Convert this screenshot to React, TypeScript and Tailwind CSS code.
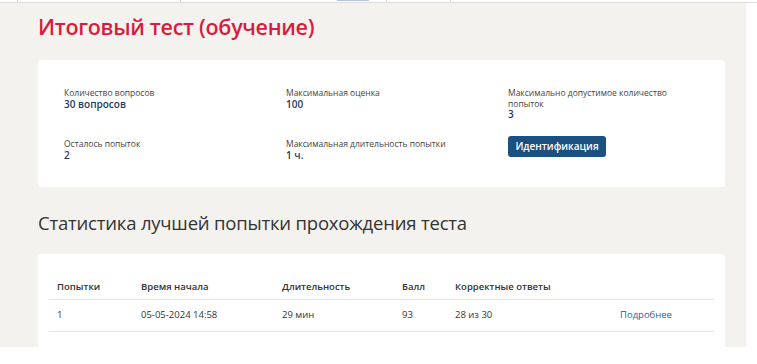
import React from 'react';

const info = [
  { label: 'Количество вопросов', value: '30 вопросов' },
  { label: 'Максимальная оценка', value: '100' },
  { label: 'Максимально допустимое количество попыток', value: '3' },
  { label: 'Осталось попыток', value: '2' },
  { label: 'Максимальная длительность попытки', value: '1 ч.' },
];

const attempts = [
  { n: '1', start: '05-05-2024 14:58', dur: '29 мин', score: '93', correct: '28 из 30' },
];

function InfoItem({ label, value }: { label: string; value: string }) {
  return (
    <div className="flex flex-col">
      <span className="text-[8.5px] leading-[10.5px] text-[#444]">{label}</span>
      <span className="text-[10px] leading-[11px] font-semibold text-[#1d3a63]">{value}</span>
    </div>
  );
}

export default function App() {
  return (
    <div className="w-[757px] h-[364px] bg-white overflow-hidden font-['Open_Sans',sans-serif]">
      {/* Cut-off tab strip */}
      <div className="h-[3px] flex items-end border-b border-[#dcdcdc]">
        <div className="ml-[17px] w-[164px] h-full border-x border-[#d6d6d6]" />
        <div className="ml-[156px] w-[32px] h-[1px] self-start bg-[#b4c2d6]" />
        <div className="ml-[17px] w-[65px] h-full border-x border-[#d6d6d6]" />
      </div>

      {/* Main panel */}
      <div className="w-[746px] h-[344px] bg-[#f3f2ee] overflow-hidden px-[38px] pr-[21px]">
        <h1 className="pt-[8px] text-[21.5px] leading-[32px] font-semibold text-[#d81c3d] tracking-[-0.3px]">
          Итоговый тест (обучение)
        </h1>

        {/* Test info card */}
        <div className="mt-[17px] h-[127px] bg-white rounded-[3px] pl-[26px] pt-[28px]">
          <div className="grid grid-cols-[222px_222px_165px] gap-y-[19px]">
            <InfoItem {...info[0]} />
            <InfoItem {...info[1]} />
            <InfoItem {...info[2]} />
            <InfoItem {...info[3]} />
            <InfoItem {...info[4]} />
            <div className="-mt-[7px]">
              <button className="w-[98px] h-[21px] rounded-[3px] bg-[#1b5082] text-white text-[10px] font-semibold">
                Идентификация
              </button>
            </div>
          </div>
        </div>

        {/* Best attempt statistics */}
        <h2 className="mt-[22px] text-[18.5px] leading-[28px] text-[#333] tracking-[-0.2px]">
          Статистика лучшей попытки прохождения теста
        </h2>

        <div className="mt-[17px] bg-white rounded-[3px] px-[11px] pt-[26px] pb-[20px]">
          <table className="w-full text-left text-[9.5px] text-[#333]">
            <thead>
              <tr className="border-b border-[#e4e4e4]">
                <th className="w-[92px] pl-[8px] h-[19px] font-semibold align-top">Попытки</th>
                <th className="w-[141px] font-semibold align-top">Время начала</th>
                <th className="w-[120px] font-semibold align-top">Длительность</th>
                <th className="w-[53px] font-semibold align-top">Балл</th>
                <th className="w-[165px] font-semibold align-top">Корректные ответы</th>
                <th />
              </tr>
            </thead>
            <tbody>
              {attempts.map((a) => (
                <tr key={a.n} className="border-b border-[#e4e4e4] h-[32px]">
                  <td className="pl-[8px]">{a.n}</td>
                  <td>{a.start}</td>
                  <td>{a.dur}</td>
                  <td>{a.score}</td>
                  <td>{a.correct}</td>
                  <td className="text-[#2b5f91]">Подробнее</td>
                </tr>
              ))}
            </tbody>
          </table>
        </div>
      </div>
    </div>
  );
}
